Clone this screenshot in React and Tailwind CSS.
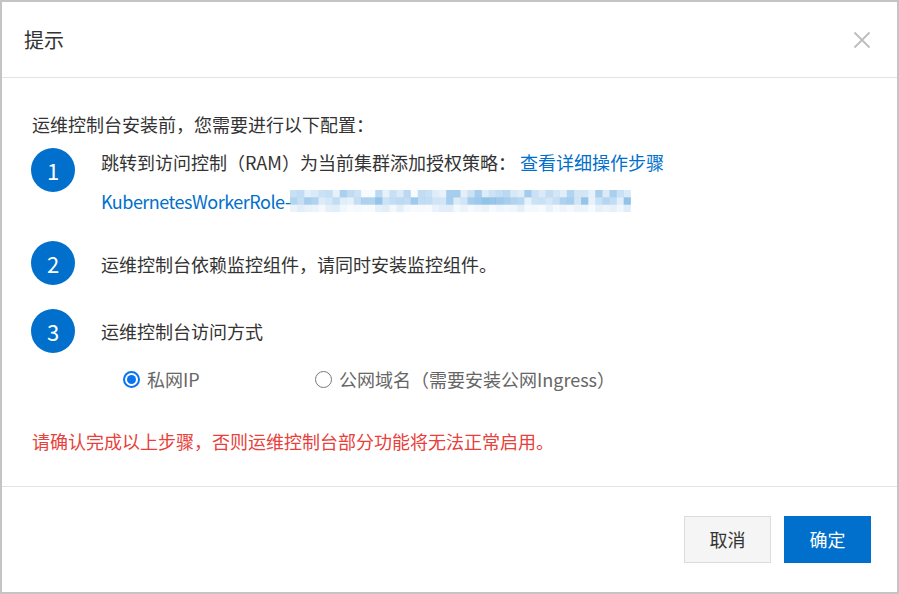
import React from 'react';

const font = { fontFamily: '"Noto Sans CJK SC", "Noto Sans", sans-serif' };

// pixelated mosaic that hides the role suffix
function Mosaic() {
  const cols = 48;
  const rows = [0.22, 0.26, 0.08];
  let seed = 7;
  const rand = () => {
    seed = (seed * 9301 + 49297) % 233280;
    return seed / 233280;
  };
  const cells = [];
  for (let r = 0; r < 3; r++) {
    for (let c = 0; c < cols; c++) {
      const v = rand();
      const gap = (c === 10 || c === 11 || c === 17) && r !== 1;
      const op = gap ? 0.03 : Math.max(0.03, rows[r] * (0.35 + v * 1.3));
      cells.push(
        <rect key={r + '-' + c} x={c * 7.1} y={r * 7.3} width="7.2" height="7.4" fill="#0070cc" fillOpacity={op} />
      );
    }
  }
  return (
    <svg width="341" height="22" viewBox="0 0 341 22" className="block">
      {cells}
    </svg>
  );
}

function StepBadge({ n }) {
  return (
    <div className="w-[44px] h-[44px] rounded-full bg-[#0070cc] text-white flex items-center justify-center text-[22px] shrink-0">
      {n}
    </div>
  );
}

function Radio({ checked, label, className }) {
  return (
    <label className={'flex items-center gap-[7px] text-[#666] ' + (className || '')}>
      {checked ? (
        <span className="w-[17px] h-[17px] rounded-full border-2 border-[#0a74f0] flex items-center justify-center bg-white">
          <span className="w-[9px] h-[9px] rounded-full bg-[#0a74f0]" />
        </span>
      ) : (
        <span className="w-[17px] h-[17px] rounded-full border-[1.5px] border-[#777] bg-white" />
      )}
      <span>{label}</span>
    </label>
  );
}

export default function App() {
  return (
    <div style={font} className="w-[899px] h-[594px] bg-white border-2 border-[#c4c4c4] flex flex-col text-[#333]">
      <div className="h-[76px] shrink-0 border-b border-[#e3e3e3] flex items-center justify-between pl-[22px] pr-[26px]">
        <span className="text-[20px] text-[#333]">提示</span>
        <svg width="18" height="18" viewBox="0 0 18 18" className="text-[#bdbdbd]">
          <path d="M1.5 1.5 L16.5 16.5 M16.5 1.5 L1.5 16.5" stroke="currentColor" strokeWidth="1.8" fill="none" />
        </svg>
      </div>

      <div className="flex-1 pl-[30px] pr-[30px] pt-[33px] text-[18px] leading-[26px]">
        <p>运维控制台安装前，您需要进行以下配置：</p>

        <div className="flex items-start gap-[26px] mt-[11px] -ml-[1px]">
          <StepBadge n="1" />
          <div className="pt-[1px]">
            <p>
              跳转到访问控制（RAM）为当前集群添加授权策略：
              <a className="text-[#0070cc] ml-[4px]">查看详细操作步骤</a>
            </p>
            <div className="flex items-center mt-[13px] text-[#0070cc]">
              <span className="tracking-[-0.5px]">KubernetesWorkerRole-</span>
              <Mosaic />
            </div>
          </div>
        </div>

        <div className="flex items-center gap-[26px] mt-[27px] -ml-[1px]">
          <StepBadge n="2" />
          <p className="pt-[2px]">运维控制台依赖监控组件，请同时安装监控组件。</p>
        </div>

        <div className="flex items-center gap-[26px] mt-[24px] -ml-[1px]">
          <StepBadge n="3" />
          <p>运维控制台访问方式</p>
        </div>

        <div className="flex items-center mt-[13px] pl-[91px]">
          <Radio checked label="私网IP" className="w-[192px]" />
          <Radio label="公网域名（需要安装公网Ingress）" />
        </div>

        <p className="mt-[36px] text-[#e8403a]">请确认完成以上步骤，否则运维控制台部分功能将无法正常启用。</p>
      </div>

      <div className="h-[106px] shrink-0 border-t border-[#e3e3e3] flex items-start justify-end gap-[13px] pt-[29px] pr-[26px]">
        <button className="w-[87px] h-[47px] bg-[#f5f5f5] border border-[#dcdcdc] text-[#333] text-[18px]">取消</button>
        <button className="w-[87px] h-[47px] bg-[#0070cc] text-white text-[18px]">确定</button>
      </div>
    </div>
  );
}
